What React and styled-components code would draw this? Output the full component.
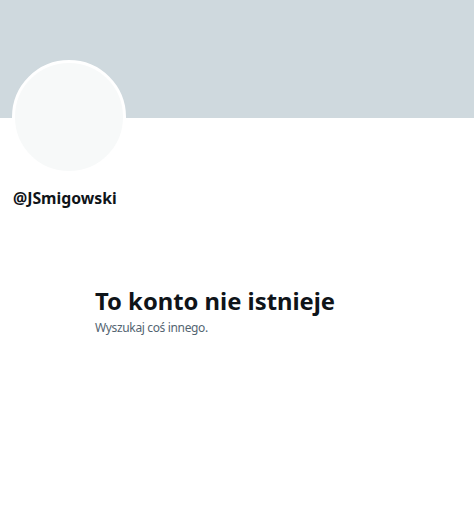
import React from "react";
import styled, { createGlobalStyle } from "styled-components";

const Global = createGlobalStyle`
  html, body { margin: 0; padding: 0; background: #ffffff; }
  body { font-family: "Segoe UI", "Noto Sans", "Open Sans", Arial, sans-serif; }
  * { box-sizing: border-box; }
`;

const Page = styled.div`
  width: 474px;
  min-height: 531px;
  background: #ffffff;
  display: flex;
  flex-direction: column;
`;

const Banner = styled.div`
  height: 118px;
  background: #cfd9de;
`;

const ProfileHead = styled.div`
  padding: 0 12px;
  display: flex;
  flex-direction: column;
`;

const Avatar = styled.div`
  width: 114px;
  height: 114px;
  margin-top: -58px;
  border-radius: 50%;
  background: #f7f9f9;
  border: 3px solid #ffffff;
`;

const Handle = styled.div`
  margin-top: 14px;
  padding-left: 1px;
  font-family: "Noto Sans", "Open Sans", sans-serif;
  font-weight: 700;
  font-size: 15.8px;
  line-height: 20px;
  color: #0f1419;
`;

const Empty = styled.div`
  width: 284px;
  margin: 78px auto 0;
  display: flex;
  flex-direction: column;
`;

const Title = styled.h2`
  margin: 0;
  font-family: "Noto Sans", "Open Sans", sans-serif;
  font-weight: 700;
  font-size: 23.8px;
  line-height: 30px;
  color: #0f1419;
`;

const Sub = styled.p`
  margin: 4px 0 0;
  font-family: "Noto Sans", "Open Sans", sans-serif;
  font-size: 12px;
  letter-spacing: -0.35px;
  line-height: 16px;
  color: #536471;
`;

export default function App() {
  return (
    <>
      <Global />
      <Page>
        <Banner />
        <ProfileHead>
          <Avatar />
          <Handle>@JSmigowski</Handle>
        </ProfileHead>
        <Empty>
          <Title>To konto nie istnieje</Title>
          <Sub>Wyszukaj coś innego.</Sub>
        </Empty>
      </Page>
    </>
  );
}
